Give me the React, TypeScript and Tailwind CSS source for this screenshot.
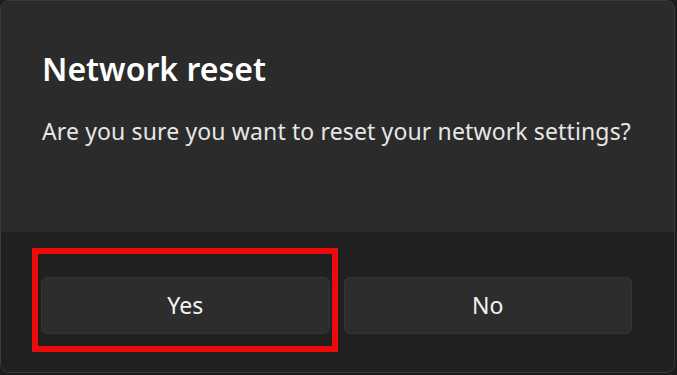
import React from 'react';

const font = { fontFamily: '"Noto Sans", "Open Sans", sans-serif' };

const DialogButton = ({ label }: { label: string }) => (
  <button className="h-[57px] flex-1 rounded-[6px] border border-[#353535] bg-[#2d2d2d] text-[23px] text-[#f3f3f3]">
    {label}
  </button>
);

const App = () => {
  return (
    <div className="h-[375px] w-[677px] bg-[#1c1c1c]" style={font}>
      <div className="flex h-[373px] w-[675px] flex-col overflow-hidden rounded-[9px] border border-[#3b3b3b] bg-[#2b2b2b]">
        <div className="h-[231px] pl-[41px] pt-[46px]">
          <h1 className="text-[32px] font-semibold leading-[44px] text-white">Network reset</h1>
          <p className="mt-[25px] text-[23px] leading-[30px] tracking-[0.13px] text-[#e6e6e6]">
            Are you sure you want to reset your network settings?
          </p>
        </div>
        <div className="relative flex flex-1 gap-[14px] border-t border-[#1d1d1d] bg-[#202020] pl-[40px] pr-[42px] pt-[44px]">
          <DialogButton label="Yes" />
          <DialogButton label="No" />
          <div className="absolute left-[31px] top-[15px] h-[104px] w-[306px] border-[6px] border-[#ee0a0a]" />
        </div>
      </div>
    </div>
  );
};

export default App;
